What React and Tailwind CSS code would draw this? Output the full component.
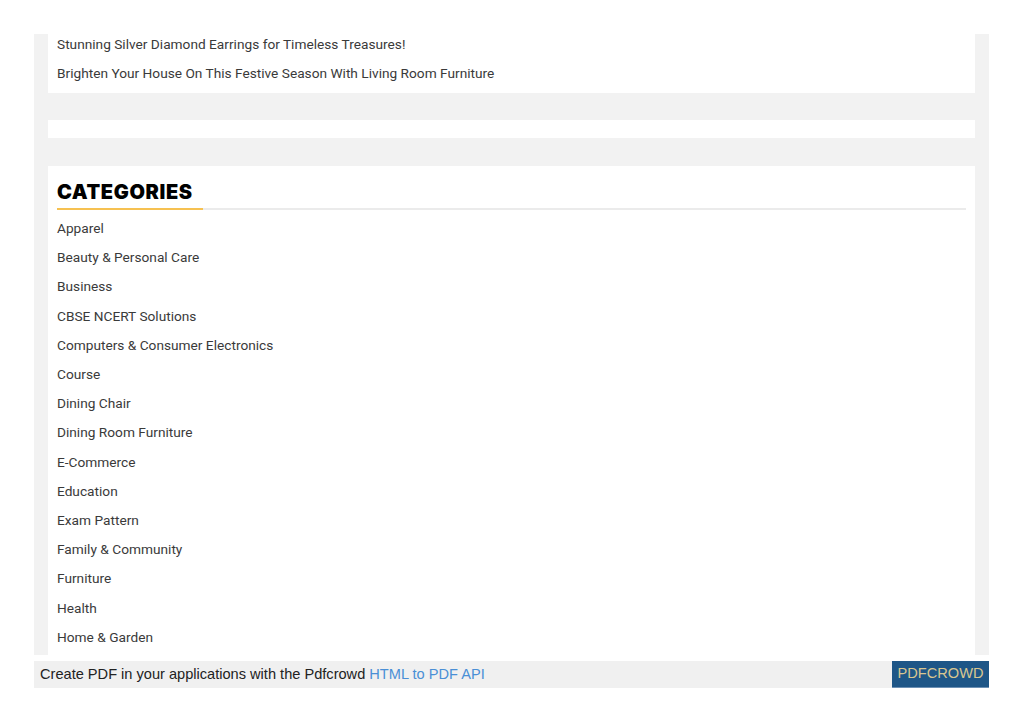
import React from 'react';

const recent = [
    'Stunning Silver Diamond Earrings for Timeless Treasures!',
    'Brighten Your House On This Festive Season With Living Room Furniture',
];

const categories = [
    'Apparel',
    'Beauty & Personal Care',
    'Business',
    'CBSE NCERT Solutions',
    'Computers & Consumer Electronics',
    'Course',
    'Dining Chair',
    'Dining Room Furniture',
    'E-Commerce',
    'Education',
    'Exam Pattern',
    'Family & Community',
    'Furniture',
    'Health',
    'Home & Garden',
];

const App = () => {
    return (
        <div className="w-[1023px] h-[724px] bg-white overflow-hidden" style={{ fontFamily: 'Roboto, sans-serif' }}>
            {/* Sidebar column */}
            <div className="ml-[34px] mt-[34px] w-[955px] h-[621px] bg-[#f2f2f2] px-[14px] overflow-hidden">
                <div className="h-[59px] bg-white overflow-hidden">
                    <ul className="-mt-[4px] px-[9px]">
                        {recent.map((t) => (
                            <li key={t} className="text-[13.7px] leading-[29px] text-[#3a3a3a]">{t}</li>
                        ))}
                    </ul>
                </div>

                <div className="mt-[27px] h-[18px] bg-white"></div>

                <div className="mt-[28px] h-[489px] bg-white px-[9px] pt-[14px]">
                    <div className="relative border-b-2 border-[#ebebeb] pb-[4px]">
                        <h2 className="text-[20px] leading-[24px] font-black tracking-[0.03em] text-black" style={{ fontFamily: 'Inter, sans-serif' }}>
                            CATEGORIES
                        </h2>
                        <span className="absolute left-0 -bottom-[2px] h-[2px] w-[146px] bg-[#f6c151]"></span>
                    </div>
                    <ul className="pt-[4px]">
                        {categories.map((c) => (
                            <li key={c} className="text-[13.7px] leading-[29.2px] text-[#3a3a3a]">{c}</li>
                        ))}
                    </ul>
                </div>
            </div>

            {/* Pdfcrowd footer */}
            <div className="ml-[34px] mt-[6px] w-[955px] h-[27px] flex items-stretch" style={{ fontFamily: '"Liberation Sans", Arial, sans-serif' }}>
                <div className="flex-1 bg-[#f0f0f0] flex items-center pl-[6px] text-[14.6px] text-[#222]">
                    <span>Create PDF in your applications with the Pdfcrowd <span className="text-[#4a8fd6]">HTML to PDF API</span></span>
                </div>
                <div className="w-[97px] bg-[#1e5687] border-b border-[#6b8fb3] flex items-center justify-center text-[14.6px] text-[#d9c690]">
                    PDFCROWD
                </div>
            </div>
        </div>
    );
};

export default App;
